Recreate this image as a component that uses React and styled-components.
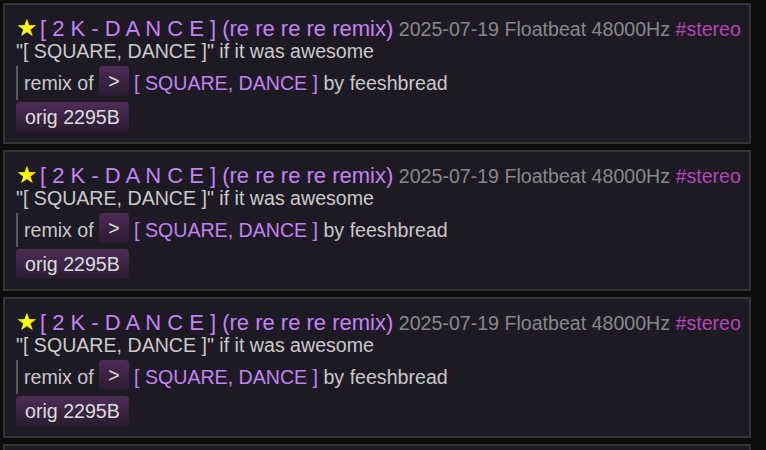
import React from "react";
import styled, { createGlobalStyle } from "styled-components";

const GlobalStyle = createGlobalStyle`
  html, body {
    margin: 0;
    background: #0c0c0c;
  }
  body {
    font-family: "Liberation Sans", Arial, sans-serif;
  }
`;

const songs = Array.from({ length: 4 }, (_, i) => ({
  id: i,
  title: "[ 2 K - D A N C E ]",
  sub: "(re re re re remix)",
  date: "2025-07-19",
  mode: "Floatbeat",
  rate: "48000Hz",
  tag: "#stereo",
  desc: "\"[ SQUARE, DANCE ]\" if it was awesome",
  parent: "[ SQUARE, DANCE ]",
  author: "feeshbread",
  size: "2295B",
}));

const App = () => {
  return (
    <>
      <GlobalStyle />
      <List>
        {songs.map((song) => (
          <Card key={song.id}>
            <TitleRow>
              <Star>★</Star>
              <SongTitle>
                {song.title} {song.sub}
              </SongTitle>{" "}
              <Meta>
                {song.date} {song.mode} {song.rate}
              </Meta>{" "}
              <Tag>{song.tag}</Tag>
            </TitleRow>
            <Desc>{song.desc}</Desc>
            <Quote>
              remix of <Button $top>&gt;</Button>{" "}
              <ParentLink>{song.parent}</ParentLink> by {song.author}
            </Quote>
            <Button>orig {song.size}</Button>
          </Card>
        ))}
      </List>
    </>
  );
};

const List = styled.div`
  display: flex;
  flex-direction: column;
  gap: 6px;
  padding: 3px 15px 0 3px;
  height: 447px;
  overflow: hidden;
`;

const Card = styled.div`
  flex-shrink: 0;
  background: #1e1a24;
  border: 2px solid #343434;
  padding: 11px 11px 10px 11px;
  font-size: 19.6px;
  line-height: 23px;
  color: #c8c8c8;
`;

const TitleRow = styled.div`
  white-space: nowrap;
  height: 24px;
  line-height: 24px;
`;

const Star = styled.span`
  color: #ffff00;
  font-size: 24px;
  margin-right: 2px;
`;

const SongTitle = styled.span`
  color: #c283f2;
  font-size: 22px;
  cursor: pointer;
`;

const ParentLink = styled.span`
  color: #c283f2;
  cursor: pointer;
`;

const Meta = styled.span`
  color: #888888;
`;

const Tag = styled.span`
  color: #b544b8;
`;

const Desc = styled.div`
  color: #cacaca;
`;

const Quote = styled.div`
  margin: 3px 0 2px 0;
  padding: 0 0 0 6px;
  height: 34px;
  border-left: 2px solid #5a5a5a;
  line-height: 35px;
`;

const Button = styled.span`
  display: inline-block;
  vertical-align: ${(p) => (p.$top ? "top" : "baseline")};
  padding: 2px 9px;
  line-height: 26px;
  color: #dcdcdc;
  border-radius: 4px;
  background: linear-gradient(#4e2c57, #2a1b30);
  cursor: pointer;
`;

export default App;
